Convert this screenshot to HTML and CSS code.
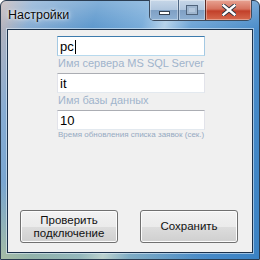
FILE: index.html
```html
<!DOCTYPE html>
<html lang="ru">
<head>
<meta charset="utf-8">
<title>Настройки</title>
<link rel="stylesheet" href="styles.css">
</head>
<body>
<div class="window">
  <div class="titlebar">
    <div class="title">Настройки</div>
    <div class="caption-buttons">
      <div class="cbtn cbtn-min"><span class="glyph-min"></span></div>
      <div class="cbtn cbtn-max"><span class="glyph-max"></span></div>
      <div class="cbtn cbtn-close">
        <svg width="14" height="12" viewBox="0 0 14 12">
          <path d="M1.5 1.5 L12.5 10.5 M12.5 1.5 L1.5 10.5" stroke="#2a3340" stroke-width="4.2" stroke-linecap="square"/>
          <path d="M1.5 1.5 L12.5 10.5 M12.5 1.5 L1.5 10.5" stroke="#ffffff" stroke-width="2.4" stroke-linecap="square"/>
        </svg>
      </div>
    </div>
  </div>
  <div class="client">
    <div class="form">
      <div class="field focused">pc<span class="caret"></span></div>
      <div class="hint">Имя сервера MS SQL Server</div>
      <div class="field">it</div>
      <div class="hint">Имя базы данных</div>
      <div class="field">10</div>
      <div class="hint small">Время обновления списка заявок (сек.)</div>
    </div>
    <div class="actions">
      <div class="button">Проверить<br>подключение</div>
      <div class="button">Сохранить</div>
    </div>
  </div>
</div>
</body>
</html>
```

FILE: styles.css
```css
html, body {
  margin: 0;
  padding: 0;
  width: 260px;
  height: 260px;
  background: #ffffff;
  overflow: hidden;
}

.window {
  box-sizing: border-box;
  width: 260px;
  height: 260px;
  border: 1px solid #2b3d52;
  border-radius: 6px 6px 0 0;
  padding: 0 6px 6px 6px;
  display: flex;
  flex-direction: column;
  background:
    linear-gradient(180deg, rgba(255,255,255,0.25) 0%, rgba(255,255,255,0) 30px),
    linear-gradient(20deg, rgba(214,214,130,0.55) 0%, rgba(214,214,130,0) 22%),
    linear-gradient(105deg, #c2b5b6 0%, #86acd3 10%, #5a96cc 30%, #74a9d8 45%, #b2d0ea 52%, #6aa2d5 60%, #4a8cc9 80%, #3a82c4 100%);
  font-family: "Liberation Sans", Arial, sans-serif;
}

.titlebar {
  height: 28px;
  display: flex;
  align-items: flex-start;
  flex: none;
}

.title {
  padding: 7px 0 0 1px;
  font-size: 12.5px;
  color: #0b0b0b;
  text-shadow: 0 0 6px rgba(255,255,255,0.9), 0 0 3px rgba(255,255,255,0.8);
}

.caption-buttons {
  margin-left: auto;
  margin-top: -1px;
  margin-right: 1px;
  display: flex;
  height: 20px;
  border: 1px solid #3c4b5e;
  border-top: none;
  border-radius: 0 0 5px 5px;
  overflow: hidden;
}

.cbtn {
  height: 20px;
  display: flex;
  align-items: center;
  justify-content: center;
  box-shadow: inset 0 0 0 1px rgba(255,255,255,0.35);
}

.cbtn-min {
  width: 28px;
  background: linear-gradient(180deg, #c7d7e8 0%, #b0c6de 48%, #7fa0c4 52%, #8eb0d3 100%);
  border-right: 1px solid #4e6784;
}

.cbtn-max {
  width: 26px;
  background: linear-gradient(180deg, #c7d7e8 0%, #b0c6de 48%, #7fa0c4 52%, #8eb0d3 100%);
  border-right: 1px solid #5a2a24;
}

.cbtn-close {
  width: 45px;
  background: linear-gradient(180deg, #e8a393 0%, #d6725e 45%, #c2402a 55%, #d66a4e 100%);
}

.glyph-min {
  display: block;
  width: 9px;
  height: 2px;
  margin-top: 5px;
  background: #ffffff;
  border: 1px solid #34404f;
}

.glyph-max {
  display: block;
  box-sizing: border-box;
  width: 10px;
  height: 8px;
  border: 2px solid #9fb6cf;
  outline: 1px solid #4f647c;
  background: #b3c7dd;
}

.client {
  flex: 1;
  background: #f0f0f0;
  border: 1px solid #1b314b;
  box-shadow: 0 0 0 1px rgba(230,240,250,0.55);
  display: flex;
  flex-direction: column;
}

.form {
  padding: 6px 0 0 49px;
  display: flex;
  flex-direction: column;
}

.field {
  box-sizing: border-box;
  width: 148px;
  height: 20px;
  background: #ffffff;
  border: 1px solid #e2e3ea;
  border-top-color: #abadb3;
  border-bottom-color: #e3e9ef;
  padding: 2px 0 0 2px;
  font-family: "Liberation Sans", Arial, sans-serif;
  font-size: 13px;
  line-height: 15px;
  color: #000000;
}

.field.focused {
  border-color: #a4c9e3;
  border-top-color: #3d7bad;
  border-bottom-color: #b7d9ed;
}

.caret {
  display: inline-block;
  width: 1px;
  height: 14px;
  background: #000000;
  vertical-align: -3px;
  margin-left: 1px;
}

.hint {
  height: 17px;
  font-size: 11px;
  line-height: 14px;
  color: #a0b4cc;
  padding-left: 1px;
}

.hint.small {
  font-size: 8px;
  line-height: 10px;
  height: 10px;
  color: #96aac2;
}

.actions {
  margin-top: auto;
  padding: 0 0 9px 12px;
  display: flex;
  gap: 22px;
}

.button {
  box-sizing: border-box;
  width: 98px;
  height: 33px;
  border: 1px solid #707070;
  border-radius: 3px;
  box-shadow: inset 0 0 0 1px #fcfcfc;
  background: linear-gradient(180deg, #f2f2f2 0%, #ebebeb 50%, #dddddd 51%, #cfcfcf 100%);
  display: flex;
  align-items: center;
  justify-content: center;
  text-align: center;
  font-size: 11.5px;
  line-height: 13px;
  color: #111111;
}
```
